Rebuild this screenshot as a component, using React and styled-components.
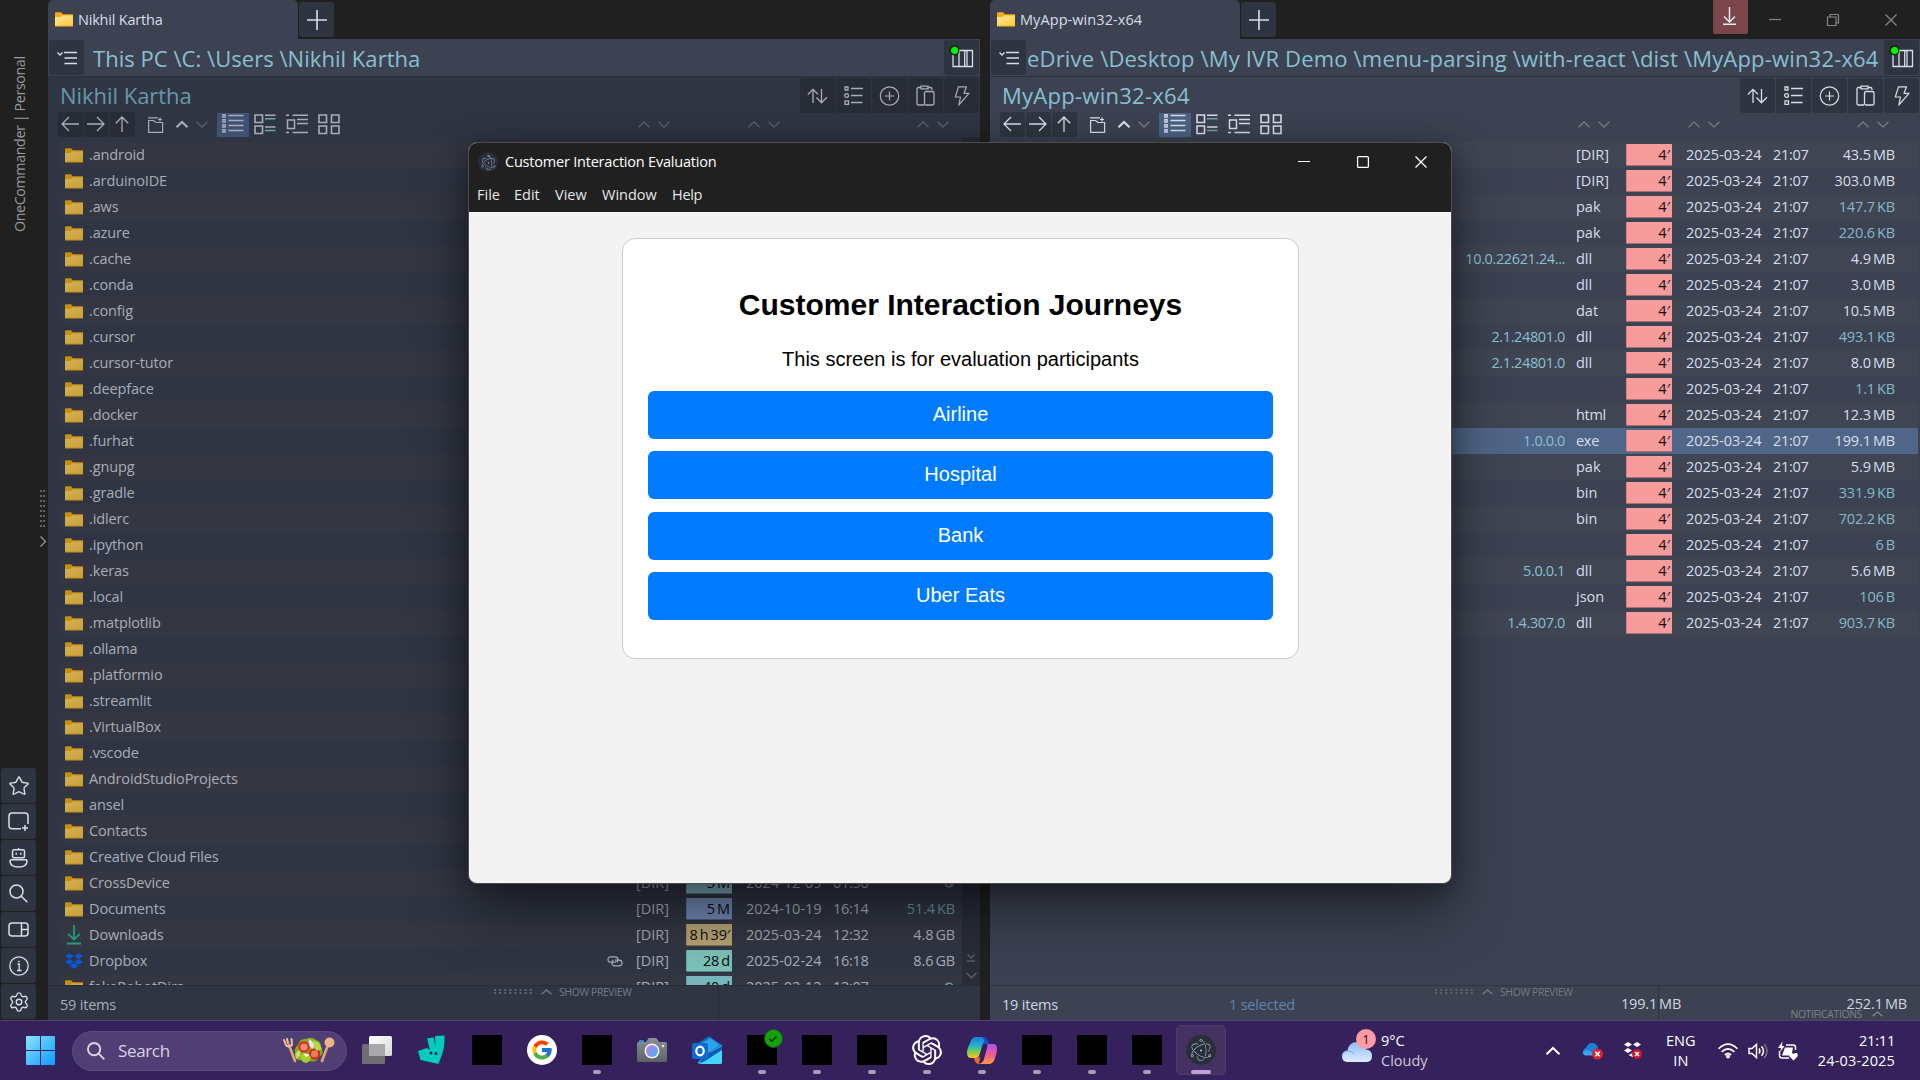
import React from "react";
import styled, { createGlobalStyle } from "styled-components";
import { Star, Settings } from "lucide-react";
import { SiElectron, SiOpenai, SiDropbox } from "react-icons/si";
import { FcGoogle } from "react-icons/fc";

const ui = `"Open Sans", "Noto Sans", sans-serif`;

const Global = createGlobalStyle`
  * { box-sizing: border-box; }
  body { margin: 0; background: #202020; font-family: ${ui}; overflow: hidden; }
  svg { display: block; flex: none; overflow: visible; }
`;

/* ---------- primitives ---------- */
const Desktop = styled.div`
  position: relative;
  width: 1920px;
  height: 1080px;
  display: flex;
  flex-direction: column;
  overflow: hidden;
  background: #202020;
`;
const Workspace = styled.div`
  height: 1020px;
  display: flex;
`;
const Label = styled.span`
  font-size: ${(p) => p.$size || 14.5}px;
  letter-spacing: ${(p) => p.$ls || 0}px;
  word-spacing: ${(p) => p.$ws || 0}px;
  color: ${(p) => p.$color || "inherit"};
  margin-left: ${(p) => p.$ml || 0}px;
  line-height: 20px;
  white-space: pre;
  flex: none;
`;

/* ---------- left rail ---------- */
const Rail = styled.aside`
  width: 48px;
  height: 100%;
  display: flex;
  flex-direction: column;
  padding: 54px 0 0 1px;
  color: #9b9b9b;
`;
const RailTitle = styled.div`
  writing-mode: vertical-rl;
  transform: rotate(180deg);
  height: 178px;
  width: 20px;
  margin-left: 9px;
  line-height: 20px;
  font-size: 14.3px;
  white-space: pre;
  letter-spacing: -0.4px;
`;
const RailGrip = styled.div`
  margin: 258px 0 0 39px;
  height: 278px;
  display: flex;
  flex-direction: column;
  gap: 8px;
`;
const RailButtons = styled.div`
  display: flex;
  flex-direction: column;
  gap: 1px;
`;
const Square = styled.div`
  width: ${(p) => p.$w || 35}px;
  height: ${(p) => p.$h || 35}px;
  padding: ${(p) => p.$pad || 0};
  border-radius: 3px;
  background: ${(p) => p.$bg || "#2e3440"};
  color: ${(p) => p.$color || "#d8dee9"};
  display: flex;
  align-items: center;
  justify-content: center;
  flex: none;
`;

/* ---------- panes ---------- */
const Pane = styled.section`
  width: ${(p) => p.$w}px;
  margin-right: ${(p) => p.$gap || 0}px;
  height: 100%;
  display: flex;
  flex-direction: column;
  flex: none;
`;
const TabStrip = styled.div`
  height: 39px;
  display: flex;
`;
const Tab = styled.div`
  width: 250px;
  height: 39px;
  background: #3c4252;
  border-radius: 5px 5px 0 0;
  display: flex;
  align-items: center;
  padding-left: 7px;
  color: #d8dee9;
`;
const NewTab = styled.div`
  padding: 2px 0 0 1px;
`;
const PathBar = styled.div`
  height: 38px;
  background: #3c4252;
  border-bottom: 1px solid #2b303c;
  display: flex;
  align-items: flex-start;
  padding: 1px 1px 0 1px;
`;
const PathText = styled.div`
  flex: 1;
  height: 36px;
  display: flex;
  align-items: center;
  color: #88c0d0;
  overflow: hidden;
`;
const PaneBody = styled.div`
  height: 908px;
  background: ${(p) => (p.$active ? "#3c4252" : "#2f3543")};
  color: ${(p) => (p.$active ? "#d8dee9" : "#a9adb7")};
  display: flex;
  flex-direction: column;
  overflow: hidden;
`;
const HeadRow = styled.div`
  height: 36px;
  padding: 1px 1px 0 12px;
  display: flex;
  justify-content: space-between;
`;
const HeadTitle = styled.div`
  height: 33px;
  display: flex;
  align-items: center;
  color: ${(p) => (p.$active ? "#88c0d0" : "#659aa8")};
`;
const ToolGroup = styled.div`
  display: flex;
  gap: 1px;
`;
const NavRow = styled.div`
  height: 29px;
  margin-top: -1px;
  padding-left: 10px;
  display: flex;
  align-items: flex-start;
`;
const NavExtras = styled.div`
  display: flex;
  align-items: center;
  height: 25px;
  margin-left: 13px;
  gap: 8px;
`;
const History = styled.div`
  display: flex;
  align-items: center;
  gap: 8px;
  margin-left: 5px;
`;
const Faint = styled.div`
  color: ${(p) => (p.$active ? "#73777f" : "#5c5f66")};
`;
const ViewModes = styled.div`
  display: flex;
  height: 24px;
  margin: 1px 0 0 9px;
`;
const ViewMode = styled.div`
  width: 32px;
  height: 24px;
  padding-bottom: 2px;
  display: flex;
  align-items: center;
  justify-content: center;
  background: ${(p) => p.$bg || "transparent"};
`;
const SortPair = styled.div`
  display: flex;
  gap: 8px;
  margin: 9px 0 0 ${(p) => p.$ml}px;
  color: ${(p) => (p.$active ? "#73777f" : "#5c5f66")};
`;
const ListArea = styled.div`
  flex: 1;
  display: flex;
  min-height: 0;
  padding-left: 10px;
`;
const Rows = styled.div`
  flex: 1;
  padding-top: 1px;
  overflow: hidden;
`;
const Row = styled.div`
  height: 26px;
  display: flex;
  align-items: center;
  padding-left: 7px;
  background: ${(p) =>
    p.$selected ? "#506688" : p.$alt ? (p.$active ? "#404554" : "#343742") : "transparent"};
`;
const NameCell = styled.div`
  display: flex;
  align-items: center;
  gap: 6px;
  flex: 1;
`;
const LinkCell = styled.div`
  width: 29px;
`;
const VersionCell = styled.div`
  flex: 1;
  display: flex;
  justify-content: flex-end;
  color: #88c0d0;
  padding-right: 11px;
`;
const ExtCell = styled.div`
  width: ${(p) => p.$w}px;
  display: flex;
`;
const AgeCell = styled.div`
  width: 46px;
  height: 22px;
  background: ${(p) => p.$bg};
  box-shadow: inset 1px 0 rgba(0, 0, 0, 0.15), inset 0 -1px rgba(0, 0, 0, 0.3);
  color: #0c0c0c;
  display: flex;
  align-items: center;
  justify-content: flex-end;
  padding-right: 2px;
`;
const DateCell = styled.div`
  width: 87px;
  margin-left: 14px;
  display: flex;
`;
const TimeCell = styled.div`
  width: 36px;
  display: flex;
`;
const SizeCell = styled.div`
  width: 86px;
  display: flex;
  justify-content: flex-end;
  color: ${(p) => (p.$dim ? "#83b9c8" : "inherit")};
  opacity: ${(p) => (p.$dim && !p.$active ? 0.7 : 1)};
`;
const RowEnd = styled.div`
  width: ${(p) => p.$w}px;
`;
const Scroll = styled.div`
  width: 18px;
  margin-top: -4px;
  background: #282d38;
  color: #5c5f66;
  display: flex;
  flex-direction: column;
  align-items: center;
  justify-content: flex-end;
  gap: 10px;
  padding-bottom: 6px;
`;
const Status = styled.div`
  height: 35px;
  border-top: 1px solid ${(p) => (p.$active ? "#2e3440" : "#262b36")};
  background: ${(p) => (p.$active ? "#3c4252" : "#2f3543")};
  color: ${(p) => (p.$active ? "#d0d5e0" : "#a9adb7")};
  display: flex;
`;
const StatusItems = styled.div`
  width: ${(p) => p.$w}px;
  padding: 9px 0 0 ${(p) => p.$pl}px;
  flex: none;
  display: flex;
`;
const Preview = styled.div`
  display: flex;
  align-items: center;
  height: 11px;
  color: #747985;
  width: ${(p) => p.$w}px;
  flex: none;
`;
const PreviewChevron = styled.div`
  margin: 0 7px 0 9px;
`;
const Totals = styled.div`
  height: 34px;
  flex: 1;
  margin-left: ${(p) => p.$ml || 0}px;
  border-left: 1px solid ${(p) => (p.$active ? "#2e3440" : "#262b36")};
  display: flex;
  flex-direction: column;
  align-items: flex-end;
  padding: 8px 13px 0 0;
`;
const Notice = styled.div`
  display: flex;
  align-items: center;
  gap: 10px;
  height: 12px;
  margin: -6px 24px 0 0;
  color: #7d828c;
`;
const Selected = styled.div`
  width: 60px;
  padding-top: 8px;
  margin: 0 -59px 0 -1px;
  display: flex;
`;
const CaptionBar = styled.div`
  flex: 1;
  display: flex;
  justify-content: flex-end;
  color: #858585;
`;
const CaptionBtn = styled.div`
  width: 58px;
  height: 39px;
  display: flex;
  align-items: center;
  justify-content: center;
`;
const UpdateBtn = styled.div`
  width: 35px;
  height: 34px;
  background: #7a464c;
  border-radius: 0 0 2px 2px;
  margin-right: -2px;
  padding: 0 2px 2px 0;
  display: flex;
  align-items: center;
  justify-content: center;
  color: #e5e9f0;
`;

/* ---------- foreground window ---------- */
const Win = styled.div`
  position: absolute;
  left: 468px;
  top: 142px;
  width: 984px;
  height: 742px;
  border-radius: 9px;
  border: 1px solid #4b4d50;
  background: #f3f3f3;
  overflow: hidden;
`;
const WinShadow = styled.div`
  position: absolute;
  left: 468px;
  top: 142px;
  width: 984px;
  height: 742px;
  border-radius: 9px;
  box-shadow: 0 30px 60px rgba(0, 0, 0, 0.42), 0 4px 24px rgba(0, 0, 0, 0.35);
`;
const TitleBar = styled.div`
  height: 38px;
  background: #202020;
  color: #fff;
  display: flex;
  align-items: center;
  padding-left: 9px;
`;
const AppIcon = styled.div`
  width: ${(p) => p.$d}px;
  height: ${(p) => p.$d}px;
  border-radius: 50%;
  background: #2b2e3a;
  color: #9fcdd8;
  display: flex;
  align-items: center;
  justify-content: center;
  flex: none;
`;
const WinControls = styled.div`
  margin-left: auto;
  display: flex;
  align-items: center;
  height: 36px;
  padding-right: 24px;
  gap: 46.5px;
`;
const MenuBar = styled.div`
  height: 31px;
  background: #202020;
  color: #e6e6e6;
  display: flex;
  padding: 4px 0 0 8px;
  align-items: flex-start;
`;
const MenuItem = styled.div`
  width: ${(p) => p.$w}px;
  display: flex;
`;
const Page = styled.main`
  height: 671px;
  border-top: 1px solid #fff;
  padding: 25px 0 0 153px;
  font-family: "Liberation Sans", Arial, sans-serif;
`;
const Card = styled.div`
  width: 677px;
  height: 421px;
  background: #fff;
  border: 1px solid #ccc;
  border-radius: 13px;
  padding: 25px;
  display: flex;
  flex-direction: column;
  align-items: center;
`;
const CardTitle = styled.h1`
  margin: 24px 0 0;
  font-size: 30px;
  line-height: 34px;
  font-weight: 700;
  color: #000;
`;
const CardText = styled.p`
  margin: 26px 0 20px;
  font-size: 20px;
  line-height: 23px;
  color: #000;
`;
const Choices = styled.div`
  width: 625px;
  display: flex;
  flex-direction: column;
  gap: 12.4px;
`;
const Choice = styled.button`
  height: 48px;
  border: 0;
  border-radius: 6px;
  background: #007bff;
  color: #fff;
  font: 20px "Liberation Sans", Arial, sans-serif;
  padding: 0 0 1.2px;
`;

/* ---------- taskbar ---------- */
const Taskbar = styled.footer`
  position: relative;
  height: 60px;
  background: #35215c;
  border-top: 1px solid #52416a;
  display: flex;
  align-items: center;
  padding-left: 26px;
  color: #fff;
`;
const SearchBox = styled.div`
  width: 275px;
  height: 40px;
  margin: 0 2px 0 17px;
  border-radius: 20px;
  background: #503f74;
  border: 1px solid #5d4d80;
  display: flex;
  align-items: center;
  padding: 0 11px 0 14px;
  color: #d9d3e3;
`;
const Salad = styled.div`
  margin-left: auto;
`;
const TaskItems = styled.div`
  display: flex;
  height: 59px;
`;
const TaskItem = styled.div`
  width: 55px;
  height: 59px;
  padding-top: 14px;
  display: flex;
  flex-direction: column;
  align-items: center;
  gap: 5px;
`;
const Glyph = styled.div`
  width: 30px;
  height: 30px;
  display: flex;
  align-items: center;
  justify-content: center;
  flex: none;
`;
const Blank = styled.div`
  position: relative;
  width: 30px;
  height: 30px;
  background: #000;
`;
const Check = styled.div`
  position: absolute;
  right: -6px;
  top: -6px;
  width: 19px;
  height: 19px;
  border-radius: 50%;
  background: #13a10e;
  border: 1px solid #1d5a20;
  display: flex;
  align-items: center;
  justify-content: center;
  color: #0b2a0a;
`;
const Pip = styled.div`
  width: ${(p) => (p.$on ? 20 : 8)}px;
  height: 4px;
  border-radius: 2px;
  background: ${(p) => (p.$on ? "#c39fdc" : "#a89bb9")};
`;
const ActiveTile = styled.div`
  width: 50px;
  height: 50px;
  margin: 4px 0 0 2px;
  padding-top: 9px;
  border-radius: 5px;
  background: #443263;
  border: 1px solid #4e3d6c;
  display: flex;
  flex-direction: column;
  align-items: center;
  gap: 5px;
`;
const Weather = styled.div`
  margin-left: 116px;
  display: flex;
  align-items: center;
  gap: 9px;
`;
const Stack = styled.div`
  display: flex;
  flex-direction: column;
  align-items: ${(p) => p.$align || "flex-start"};
  width: ${(p) => p.$w || "auto"};
  margin-right: ${(p) => p.$mr || 0}px;
`;
const Tray = styled.div`
  margin-left: auto;
  display: flex;
  align-items: center;
  padding-right: 25px;
`;
const TrayIcon = styled.div`
  margin-right: ${(p) => p.$mr}px;
`;

/* ---------- icons ---------- */
const Ico = ({ w, h, sw = 1.3, children }) => (
  <svg width={w} height={h} viewBox={`0 0 ${w} ${h}`} fill="none" stroke="currentColor" strokeWidth={sw}>
    {children}
  </svg>
);
const Plus = () => <Ico w={20} h={20} sw={1.6}><path d="M10 0v20M0 10h20" /></Ico>;
const PathMenu = () => <Ico w={20} h={14} sw={1.3}><path d="M0.5 1.5l2.5 2.5L5.500 1.500M7 1.500h13M7.500 7h12.500M7.500 12.500h12.500" /></Ico>;
const Columns = () => (
  <Ico w={24} h={22} sw={1.3}>
    <path d="M3 3.500h19.500v16H3zM9 3.500v16M14.700 3.500v16M17 3.500v16" />
    <circle cx="4.500" cy="3.500" r="4.300" fill="#00f400" stroke="#0d1a0d" strokeWidth="1.200" />
  </Ico>
);
const UpDown = () => <Ico w={21} h={16}><path d="M6 15V1.500M0.800 6.500L6 1.300l5 5M14.500 1v13.500M9.500 9.500l5 5.200 5.500-5.500" /></Ico>;
const Bullets = () => <Ico w={19} h={19}><path d="M7 2.500h12M7 9.500h11.500M7 16.500h11.500M1 1h3v3h-3zM1 14.800h3.500v3.500h-3.500z" /><circle cx="2.600" cy="9.500" r="1.900" /></Ico>;
const AddCircle = () => <Ico w={20} h={20} sw={1.2}><circle cx="9.500" cy="10" r="9.200" /><path d="M9.500 5.500v9M5 10h9" /></Ico>;
const Paste = () => <Ico w={19} h={21} sw={1.3}><path d="M8 20H2.500q-1.500 0-1.500-1.500V4q0-1.500 1.500-1.500H5M12 2.500h2.500q1.500 0 1.500 1.500v1M5 1.200h7v2.600H5z" /><rect x="8.500" y="6.500" width="9.500" height="13.500" rx="1.500" /></Ico>;
const Bolt = () => <Ico w={16} h={20} sw={1.2}><path d="M4.500 0.800h8l-2.500 6.500h5L4.800 19l1.700-8H1.300z" strokeLinejoin="round" /></Ico>;
const ArrowL = () => <Ico w={18} h={16}><path d="M18 8H1M8 1L1 8l7 7" /></Ico>;
const ArrowR = () => <Ico w={18} h={16}><path d="M0 8h17M10 1l7 7-7 7" /></Ico>;
const ArrowU = () => <Ico w={14} h={16}><path d="M7 16V1M0.800 7.200L7 1l6.200 6.200" /></Ico>;
const FolderStar = () => <Ico w={15} h={16} sw={1.2}><path d="M0 .8h10M0.600 4v11.400h14V5.500H8L5.500 3.500H.6zM12 .5v4M10 2.500h4" /></Ico>;
const Chev = ({ down, sw = 1.4, w = 12, h = 7 }) => <Ico w={w} h={h} sw={sw}><path d={down ? `M.5 .7L${w / 2} ${h - 1}L${w - 0.5} .7` : `M.5 ${h - 0.7}L${w / 2} 1L${w - 0.5} ${h - 0.7}`} /></Ico>;
const ViewList = () => <Ico w={22} h={20} sw={1.7}><path d="M6.500 1.500h15M6.500 6.500h15M6.500 11.500h15M6.500 16.500h15" /><path d="M.8.600h2.400v2.400H.8zM.8 5.600h2.400v2.400H.8zM.8 10.600h2.400v2.400H.8zM.8 15.600h2.400v2.400H.8z" strokeWidth="1.300" /></Ico>;
const ViewTiles = () => <Ico w={22} h={20} sw={1.6}><path d="M1 1h7.500v7.500H1zM1 12h7.500v7.500H1zM11 1.200h10.500M11 13h10.500" /><path d="M11 4.800h10.500M11 16.500h10.500" stroke="#6ba3b0" /></Ico>;
const ViewContent = () => <Ico w={22} h={20} sw={1.5}><path d="M1.500 6h7v8.500h-7zM6.500 1.300h15.500M11 5.500h11M11 9.500h11M6.500 18.500h15.500M0 1.300h3M0 18.500h3" /></Ico>;
const ViewGrid = () => <Ico w={22} h={20} sw={1.6}><path d="M1 1h7.500v7.500H1zM1 12h7.500v7.500H1zM13.500 1h7.500v7.500h-7.500zM13.500 12h7.500v7.500h-7.500z" /></Ico>;
const Folder = ({ bright }) => (
  <svg width="18" height="15" viewBox="0 0 18 15">
    <defs>
      <linearGradient id={bright ? "fb" : "fd"} x1="0" y1="0" x2="1" y2="1">
        <stop offset="0" stopColor={bright ? "#ffe694" : "#d4b25c"} />
        <stop offset="1" stopColor={bright ? "#ffc93c" : "#c9a030"} />
      </linearGradient>
    </defs>
    <path d="M0 1.200Q0 .3.900.3H6l1.800 1.900H18V14H0z" fill={bright ? "#f5ac12" : "#c68f16"} />
    <path d="M0 5h5.500l2-1.500H18V14H0z" fill={`url(#${bright ? "fb" : "fd"})`} />
    <path d="M0 14.200h18" stroke={bright ? "#e0a01c" : "#b1811a"} strokeWidth=".9" />
  </svg>
);
const DownloadGreen = () => <svg width="18" height="20" viewBox="0 0 18 20" fill="none" stroke="#1f9c7c" strokeWidth="1.800"><path d="M9 0v14M3.200 8.800L9 14.500l5.800-5.700M2 18.500h14" /></svg>;
const Link = () => <Ico w={16} h={11} sw={1.2}><path d="M9 6.200H4Q1 6.200 1 3.400T4 .8h4q3 0 3 2.600T9.500 6M8 4.200h4q3 0 3 2.800t-3 2.800H8q-3 0-3-2.800T6.500 4.400" /></Ico>;
const Empty = () => <svg width="10" height="10" viewBox="0 0 10 10" fill="none" stroke="#6fa3b0" strokeWidth="1.300"><circle cx="4" cy="5" r="3.900" /><path d="M1.500 2.500l5 5" /></svg>;
const Grip = ({ cols, rows, color = "#5f646c" }) => (
  <svg width={cols * 5 - 2} height={rows > 2 ? rows * 5 - 2 : 5} fill={color}>
    {Array.from({ length: cols * rows }, (_, i) => <rect key={i} x={(i % cols) * (cols > 2 ? 5.100 : 3)} y={Math.floor(i / cols) * (rows > 2 ? 5 : 3)} width="2" height="2" />)}
  </svg>
);
const TabAdd = () => <Ico w={21} h={20} sw={1.5}><path d="M13 16.800H4Q1 16.800 1 13.800V4q0-3 3-3h13q3 0 3 3v8M17 13v6M14 16h6" /></Ico>;
const Robot = () => <Ico w={19} h={20} sw={1.500}><path d="M9.500 0v2M5 1.800h9q1.500 0 1.500 1.500v5Q15.500 9.800 14 9.800H5q-1.500 0-1.500-1.500v-5Q3.500 1.800 5 1.800zM1 13q0-1.200 1.200-1.200h14.600Q18 11.800 18 13q0 6-8.500 6T1 13z" /><path d="M6.500 5.800h1.500M11 5.800h1.500" strokeWidth="2" /></Ico>;
const Lens = ({ s = 19, sw = 1.5 }) => <svg width={s} height={s} viewBox="0 0 19 19" fill="none" stroke="currentColor" strokeWidth={sw}><circle cx="7.500" cy="7.500" r="6.500" /><path d="M12.300 12.300l6 6" /></svg>;
const Panel = () => <Ico w={21} h={15} sw={1.500}><rect x="1" y="1" width="19" height="13" rx="3" /><path d="M13.500 1v13M13.500 7.500H20" /></Ico>;
const InfoI = () => <Ico w={20} h={20} sw={1.300}><circle cx="10" cy="10" r="9.200" /><path d="M8.500 8h1.700v6.500M8 14.500h4.500" /><path d="M9.200 5.500h1.500" /></Ico>;
const CloseX = () => <Ico w={12} h={12} sw={1.300}><path d="M.5.500l11 11M11.500.500l-11 11" /></Ico>;
const Minus = () => <Ico w={12} h={12} sw={1.200}><path d="M0 5.500h12" /></Ico>;
const WinLogo = () => (
  <svg width="29" height="29" viewBox="0 0 29 29">
    <defs><linearGradient id="wl" gradientUnits="userSpaceOnUse" x1="0" y1="0" x2="29" y2="29"><stop offset="0" stopColor="#8be4ff" /><stop offset="1" stopColor="#0a9bff" /></linearGradient></defs>
    <path d="M0 1q0-1 1-1h13v14H0zM15 0h13q1 0 1 1v13H15zM0 15h14v14H1q-1 0-1-1zM15 15h14v13q0 1-1 1H15z" fill="url(#wl)" />
  </svg>
);
const SaladArt = () => (
  <svg width="52" height="27" viewBox="0 0 52 27">
    <path d="M6 8l6 16" stroke="#e0a878" strokeWidth="2.600" strokeLinecap="round" />
    <path d="M1 3l2 5q2 3 6 0l-.5-6M4 2l1 4" stroke="#f0c39c" strokeWidth="2" fill="none" strokeLinecap="round" />
    <path d="M45 8l-6 16" stroke="#e0a878" strokeWidth="2.600" strokeLinecap="round" />
    <circle cx="46.500" cy="5.500" r="5" fill="#e9b384" />
    <path d="M15 8q2-7 8-6 6-3 10 1 6 2 5 8 4 6-2 9-3 6-9 4-6 3-9-1-6 1-5-5-3-6 2-10z" fill="#7fb31b" />
    <path d="M12 17l6-6-1 8-4 3z" fill="#c9e05a" />
    <circle cx="21" cy="10" r="5.800" fill="#d9301f" /><circle cx="21" cy="10" r="3.600" fill="#f28b72" />
    <circle cx="31.500" cy="17" r="5.800" fill="#cf2a1d" /><circle cx="31.500" cy="17" r="3.600" fill="#f07a60" />
    <path d="M30 3l6 3 3 6-5 2-5-5z" fill="#b9d64a" />
    <path d="M26 2q6 3 4 10-5-2-4-10z" fill="#f3e6f2" /><path d="M17 19q5-5 11 1-1 5-5 6-5-1-6-7z" fill="#a3cf2f" /><path d="M20 16l7 2-4 2z" fill="#fff" />
  </svg>
);
const TaskView = () => (
  <svg width="30" height="28" viewBox="0 0 30 28">
    <defs><linearGradient id="tv" x1="0" y1="0" x2="1" y2="1"><stop offset="0" stopColor="#fff" /><stop offset="1" stopColor="#d8d8d8" /></linearGradient></defs>
    <rect x="7" y="0" width="23" height="20" rx="1.500" fill="url(#tv)" />
    <rect x="0" y="8" width="23" height="20" rx="1.500" fill="#6f6f73" />
    <rect x="7" y="8" width="16" height="12" fill="#a9a9ac" />
  </svg>
);
const Roo = () => (
  <svg width="28" height="30" viewBox="0 0 28 30">
    <path d="M17 1l9.500-.5q.5 11-2.500 19l-3.500 9.500L2.500 25 0 16l9-3 3 2L9 3.500l6.500-1.200 2 9z" fill="#00ccbc" />
    <circle cx="13" cy="18" r="1.500" fill="#35215c" /><circle cx="18" cy="18.500" r="1.500" fill="#35215c" />
  </svg>
);
const CameraArt = () => (
  <svg width="30" height="24" viewBox="0 0 30 24">
    <defs><linearGradient id="cm" x1="0" y1="0" x2="1" y2="1"><stop offset="0" stopColor="#c77be8" /><stop offset="1" stopColor="#38b6f0" /></linearGradient>
      <linearGradient id="cb" x1="0" y1="0" x2="0" y2="1"><stop offset="0" stopColor="#8c9196" /><stop offset="1" stopColor="#5c6166" /></linearGradient></defs>
    <rect x="2" y="2" width="5" height="4" rx="1" fill="#2a8de0" />
    <path d="M0 5.500Q0 4 1.500 4H9l2-3q.5-1 1.500-1h6q1 0 1.500 1l2 3h6.500Q30 4 30 5.500v17q0 1.500-1.500 1.500h-27Q0 24 0 22.500z" fill="url(#cb)" />
    <circle cx="15" cy="13" r="7.500" fill="#f5f5f7" /><circle cx="15" cy="13" r="6" fill="url(#cm)" /><circle cx="26" cy="8" r="1.200" fill="#dfe3e6" />
  </svg>
);
const OutlookArt = () => (
  <svg width="30" height="28" viewBox="0 0 30 28">
    <path d="M4 8L17 0l13 9v6H4z" fill="#1067b8" /><path d="M8 8l10-6 10 7-12 8z" fill="#2aa4ea" />
    <path d="M30 9v17q0 2-2 2H8q-2 0-2-2l12-10z" fill="#35c3f5" /><path d="M30 10L12 20l-5 7 12-3L30 14z" fill="#0f58b5" /><path d="M30 14L9 27.500Q10 28 12 28h16q2 0 2-2z" fill="#45d4fa" />
    <rect x="0" y="7" width="16" height="16" rx="2" fill="#0f6cd0" /><ellipse cx="8" cy="15" rx="3.700" ry="4.300" fill="none" stroke="#fff" strokeWidth="2.200" />
  </svg>
);
const CopilotArt = () => (
  <svg width="30" height="27" viewBox="0 0 30 27">
    <defs>
      <linearGradient id="c1" x1="0" y1="0" x2="0" y2="1"><stop offset="0" stopColor="#1d7be0" /><stop offset=".4" stopColor="#1fb6c9" /><stop offset=".7" stopColor="#7ecb4f" /><stop offset="1" stopColor="#f6c22d" /></linearGradient>
      <linearGradient id="c2" x1="0" y1="0" x2="0" y2="1"><stop offset="0" stopColor="#a558f0" /><stop offset=".5" stopColor="#f0569a" /><stop offset="1" stopColor="#ff9a4a" /></linearGradient>
    </defs>
    <path d="M20.500 7H26q4 0 4 5 0 4-2 9-1.500 6-6.500 6H12q4-1 5-5l3-11z" fill="url(#c2)" />
    <path d="M20 5q0-5-5-5H9Q5 0 3.500 5 0 12 0 15.500 0 21 4 21h5q3 0 4-5l2.500-8Q16.500 5 20 5z" fill="url(#c1)" />
    <path d="M15 0q6 0 7 7h-4.500q-2 0-3 3 .5-4 3-5-1-4-2.500-5z" fill="#1850c0" /><path d="M7 21h3q3 0 3.500-3L12 27q-4 0-5-6z" fill="#f4603a" />
  </svg>
);
const CloudArt = () => (
  <svg width="30" height="30" viewBox="0 0 30 30">
    <defs><linearGradient id="cl" x1="0" y1="0" x2="0" y2="1"><stop offset="0" stopColor="#8fbcf5" /><stop offset="1" stopColor="#dcebff" /></linearGradient></defs>
    <path d="M6.500 26Q0 26 0 20.500 0 15 5.500 14.500 7 6 15 6q7 0 9 7.500 6 .5 6 6.500t-6 6z" fill="url(#cl)" />
    <path d="M0 20q1-5 6-5 4 0 6 3" stroke="#7aa7ea" fill="none" />
  </svg>
);
const WeatherIcon = styled.div`
  position: relative;
`;
const Badge = styled.div`
  position: absolute;
  left: 14px;
  top: -7px;
  width: 20px;
  height: 20px;
  border-radius: 50%;
  background: #ff99a4;
  color: #1c1020;
  font-size: 13px;
  line-height: 20px;
  text-align: center;
`;
const OneDrive = () => (
  <svg width="20" height="18" viewBox="0 0 20 18">
    <path d="M3 13Q0 13 0 9.500 0 7 3 6 5 1 9 1q4 0 6 4l-3 8z" fill="#1a80d9" /><path d="M3 13.500Q0 13.500 0 10q3-3 7-1l5 4.500z" fill="#3aa8f0" />
    <circle cx="14.500" cy="12" r="5.500" fill="#d9262e" /><path d="M12.300 9.800l4.400 4.400M16.700 9.800l-4.400 4.400" stroke="#fff" strokeWidth="1.500" />
  </svg>
);
const DropboxTray = () => (
  <svg width="18" height="18" viewBox="0 0 18 18">
    <path d="M4 0l4 2.500-4 2.500-4-2.500zM13 0l4 2.500-4 2.500-4-2.500zM4 6l4 2.500L4 11 0 8.500zM8.500 11l3 2-3 2-4-2z" fill="#fff" />
    <circle cx="13" cy="12" r="5" fill="#d0142c" /><path d="M11 10l4 4M15 10l-4 4" stroke="#fff" strokeWidth="1.500" />
  </svg>
);
const Wifi = () => <Ico w={20} h={15} sw={1.600}><path d="M.6 5.800q9.400-9.400 18.800 0M3.700 8.900q6.300-6 12.600 0M6.800 11.800q3.200-3 6.400 0" /><circle cx="10" cy="13.300" r="1.300" fill="currentColor" /></Ico>;
const Speaker = () => <Ico w={20} h={16} sw={1.500}><path d="M1 5.500h3L8.500 1.500v13L4 10.500H1zM11 5.500q1.800 2.500 0 5M13.500 3.200q4 4.800 0 9.600" /><path d="M16.300 1q5.500 7 0 14" opacity=".35" /></Ico>;
const Battery = () => (
  <svg width="20" height="18" viewBox="0 0 20 18" fill="none" stroke="#fff" strokeWidth="1.500">
    <path d="M8 3h7q2.500 0 2.500 2.500V8M1.500 9v4.500Q1.500 16 4 16h7" /><path d="M7 5.500h8l-1.500 8H4z" fill="#fff" stroke="none" />
    <path d="M4.500-.5L0 6h3l-1 4 4.500-6H4z" fill="#fff" stroke="none" />
    <path d="M15.500 18.500l-4-4q-1-2.500 1-3.500 2-.5 3 1 1-1.500 3-1 2 1 1 3.500z" fill="#fff" stroke="none" />
  </svg>
);

/* ---------- data ---------- */
const names = [".android", ".arduinoIDE", ".aws", ".azure", ".cache", ".conda", ".config", ".cursor", ".cursor-tutor", ".deepface", ".docker", ".furhat", ".gnupg", ".gradle", ".idlerc", ".ipython", ".keras", ".local", ".matplotlib", ".ollama", ".platformio", ".streamlit", ".VirtualBox", ".vscode", "AndroidStudioProjects", "ansel", "Contacts", "Creative Cloud Files", "CrossDevice", "Documents", "Downloads", "Dropbox", "fakeRobotDirs"];
const details = {
  CrossDevice: { age: "3 M", bg: "#86b7c8", date: "2024-12-09", time: "01:50", empty: true },
  Documents: { age: "5 M", bg: "#7389b5", date: "2024-10-19", time: "16:14", size: "51.4 KB", dim: true },
  Downloads: { age: "8 h 39′", bg: "#b8a473", date: "2025-03-24", time: "12:32", size: "4.8 GB" },
  Dropbox: { age: "28 d", bg: "#7cc2ba", date: "2025-02-24", time: "16:18", size: "8.6 GB", link: true },
  fakeRobotDirs: { age: "40 d", bg: "#76b6bc", date: "2025-02-12", time: "12:07", empty: true },
};
const files = [
  ["", "[DIR]", "43.5 MB"], ["", "[DIR]", "303.0 MB"], ["", "pak", "147.7 KB"], ["", "pak", "220.6 KB"],
  ["10.0.22621.24...", "dll", "4.9 MB"], ["", "dll", "3.0 MB"], ["", "dat", "10.5 MB"], ["2.1.24801.0", "dll", "493.1 KB"],
  ["2.1.24801.0", "dll", "8.0 MB"], ["", "", "1.1 KB"], ["", "html", "12.3 MB"], ["1.0.0.0", "exe", "199.1 MB"],
  ["", "pak", "5.9 MB"], ["", "bin", "331.9 KB"], ["", "bin", "702.2 KB"], ["", "", "6 B"], ["5.0.0.1", "dll", "5.6 MB"],
  ["", "json", "106 B"], ["1.4.307.0", "dll", "903.7 KB"],
];

const Tools = ({ bg, color }) => (
  <ToolGroup>
    {[UpDown, Bullets, AddCircle, Paste, Bolt].map((I, i) => <Square key={i} $bg={bg} $color={color}><I /></Square>)}
  </ToolGroup>
);
const Nav = ({ active }) => {
  const bg = active ? "#2f3541" : "#282c36";
  return (
    <NavRow>
      <ToolGroup>
        {[ArrowL, ArrowR, ArrowU].map((I, i) => (
          <Square key={i} $w={25} $h={25} $pad="0 1px 2px 0" $bg={bg} $color={active ? "#d8dee9" : "#a9adb7"}><I /></Square>
        ))}
      </ToolGroup>
      <NavExtras>
        <FolderStar />
        <History>
          <Chev sw={2.2} h={7} />
          <Faint $active={active}><Chev down /></Faint>
        </History>
      </NavExtras>
      <ViewModes>
        <ViewMode $bg={active ? "#4c6385" : "#405273"}><ViewList /></ViewMode>
        <ViewMode><ViewTiles /></ViewMode>
        <ViewMode><ViewContent /></ViewMode>
        <ViewMode><ViewGrid /></ViewMode>
      </ViewModes>
      <SortPair $ml={active ? 291 : 293} $active={active}><Chev /><Chev down /></SortPair>
      <SortPair $ml={78} $active={active}><Chev /><Chev down /></SortPair>
      <SortPair $ml={137} $active={active}><Chev /><Chev down /></SortPair>
    </NavRow>
  );
};
const Handle = ({ w }) => (
  <Preview $w={w}>
    <Grip cols={8} rows={2} />
    <PreviewChevron><Chev w={11} h={6} /></PreviewChevron>
    <Label $size={10.4} $ls={-0.35}>SHOW PREVIEW</Label>
  </Preview>
);

const Size = ({ children }) => <Label $ls={-0.15} $ws={-1.5}>{children}</Label>;

export default function App() {
  return (
    <>
      <Global />
      <Desktop>
        <Workspace>
          <Rail>
            <RailTitle>OneCommander | Personal</RailTitle>
            <RailGrip>
              <Grip cols={2} rows={8} />
              <Ico w={6} h={11} sw={1.2}><path d="M.5.500l5 5-5 5" /></Ico>
            </RailGrip>
            <RailButtons>
              <Square><Star size={22} strokeWidth={1.5} /></Square>
              <Square><TabAdd /></Square>
              <Square><Robot /></Square>
              <Square><Lens /></Square>
              <Square><Panel /></Square>
              <Square><InfoI /></Square>
              <Square><Settings size={22} strokeWidth={1.5} /></Square>
            </RailButtons>
          </Rail>

          <Pane $w={932} $gap={10}>
            <TabStrip>
              <Tab><Folder bright /><Label $ml={5} $ls={-0.2}>Nikhil Kartha</Label></Tab>
              <NewTab><Square><Plus /></Square></NewTab>
            </TabStrip>
            <PathBar>
              <Square><PathMenu /></Square>
              <PathText><Label $size={22} $ml={9} $ls={0.04}>{"This PC \\C: \\Users \\Nikhil Kartha"}</Label></PathText>
              <Square><Columns /></Square>
            </PathBar>
            <PaneBody>
              <HeadRow>
                <HeadTitle><Label $size={22} $ls={-0.04}>Nikhil Kartha</Label></HeadTitle>
                <Tools bg="#282c36" color="#a9adb7" />
              </HeadRow>
              <Nav />
              <ListArea>
                <Rows>
                  {names.map((n, i) => {
                    const d = details[n];
                    return (
                      <Row key={n} $alt={i % 2 === 0}>
                        <NameCell>
                          {n === "Downloads" ? <DownloadGreen /> : n === "Dropbox" ? <SiDropbox size={18} color="#0b57d8" /> : <Folder />}
                          <Label $ls={-0.13}>{n}</Label>
                        </NameCell>
                        {d && (
                          <>
                            <LinkCell>{d.link && <Link />}</LinkCell>
                            <ExtCell $w={50}><Label>[DIR]</Label></ExtCell>
                            <AgeCell $bg={d.bg}><Label $ls={-0.15} $ws={-1.5}>{d.age}</Label></AgeCell>
                            <DateCell><Label>{d.date}</Label></DateCell>
                            <TimeCell><Label $ls={-0.3}>{d.time}</Label></TimeCell>
                            <SizeCell $dim={d.dim}>{d.empty ? <Empty /> : <Size>{d.size}</Size>}</SizeCell>
                            <RowEnd $w={7} />
                          </>
                        )}
                      </Row>
                    );
                  })}
                </Rows>
                <Scroll>
                  <Ico w={10} h={8}><path d="M1.500.500L5 4 8.500.500M1 7h8" /></Ico>
                  <Chev down w={11} />
                </Scroll>
              </ListArea>
            </PaneBody>
            <Status>
              <StatusItems $w={446} $pl={12}><Label $ls={-0.2}>59 items</Label></StatusItems>
              <Handle w={224} />
              <Totals />
            </Status>
          </Pane>

          <Pane $w={930}>
            <TabStrip>
              <Tab><Folder bright /><Label $ml={5} $ls={0.07}>MyApp-win32-x64</Label></Tab>
              <NewTab><Square><Plus /></Square></NewTab>
              <CaptionBar>
                <UpdateBtn><Ico w={13} h={18} sw={1.5}><path d="M6.500 0v15M1 9.500l5.500 5.500L12 9.500M0 17.300h13" /></Ico></UpdateBtn>
                <CaptionBtn><Minus /></CaptionBtn>
                <CaptionBtn><Ico w={12} h={12} sw={1.2}><path d="M.5 3h8.500v8.500H.5zM3 3V.500h8.500V9H9" /></Ico></CaptionBtn>
                <CaptionBtn><CloseX /></CaptionBtn>
              </CaptionBar>
            </TabStrip>
            <PathBar>
              <Square><PathMenu /></Square>
              <PathText><Label $size={22} $ml={1} $ls={0.18}>{"eDrive \\Desktop \\My IVR Demo \\menu-parsing \\with-react \\dist \\MyApp-win32-x64"}</Label></PathText>
              <Square><Columns /></Square>
            </PathBar>
            <PaneBody $active>
              <HeadRow>
                <HeadTitle $active><Label $size={22} $ls={0.27}>MyApp-win32-x64</Label></HeadTitle>
                <Tools />
              </HeadRow>
              <Nav active />
              <ListArea>
                <Rows>
                  {files.map(([v, e, s], i) => (
                    <Row key={i} $active $alt={i % 2 === 0} $selected={i === 11}>
                      <VersionCell><Label $ls={-0.38}>{v}</Label></VersionCell>
                      <ExtCell $w={50}><Label $ls={e === "html" || e === "exe" ? -0.3 : 0}>{e}</Label></ExtCell>
                      <AgeCell $bg="#f79c9c"><Label>4′</Label></AgeCell>
                      <DateCell><Label>2025-03-24</Label></DateCell>
                      <TimeCell><Label $ls={-0.3}>21:07</Label></TimeCell>
                      <SizeCell $active $dim={!s.includes("MB")}><Size>{s}</Size></SizeCell>
                      <RowEnd $w={23} />
                    </Row>
                  ))}
                </Rows>
                <RowEnd $w={2} />
              </ListArea>
            </PaneBody>
            <Status $active>
              <StatusItems $w={239} $pl={12}><Label $ls={-0.2}>19 items</Label></StatusItems>
              <StatusItems $w={206} $pl={0}><Label $color="#5f82b0" $ls={-0.2}>1 selected</Label></StatusItems>
              <Handle w={187} />
              <Selected><Label $ls={-0.2} $ws={-1.5}>199.1 MB</Label></Selected>
              <Totals $active $ml={36}>
                <Label $ls={-0.15} $ws={-1.5}>252.1 MB</Label>
                <Notice><Label $size={10.4} $ls={-0.35}>NOTIFICATIONS</Label><Chev w={11} h={6} /></Notice>
              </Totals>
            </Status>
          </Pane>
        </Workspace>

        <WinShadow />
        <Taskbar>
          <WinLogo />
          <SearchBox><Lens s={18} sw={2} /><Label $size={17} $ml={13} $ls={-0.35}>Search</Label><Salad><SaladArt /></Salad></SearchBox>
          <TaskItems>
            <TaskItem><Glyph><TaskView /></Glyph></TaskItem>
            <TaskItem><Glyph><Roo /></Glyph></TaskItem>
            <TaskItem><Blank /></TaskItem>
            <TaskItem><svg width="30" height="30"><circle cx="15" cy="15" r="15" fill="#fff" /><g transform="translate(3.500 3.500)"><FcGoogle size={23} /></g></svg></TaskItem>
            <TaskItem><Blank /><Pip /></TaskItem>
            <TaskItem><Glyph><CameraArt /></Glyph></TaskItem>
            <TaskItem><Glyph><OutlookArt /></Glyph></TaskItem>
            <TaskItem><Blank><Check><Ico w={8} h={6} sw={1.5}><path d="M.5 3l2.200 2.200L7.500.500" /></Ico></Check></Blank><Pip /></TaskItem>
            <TaskItem><Blank /><Pip /></TaskItem>
            <TaskItem><Blank /><Pip /></TaskItem>
            <TaskItem><SiOpenai size={30} /><Pip /></TaskItem>
            <TaskItem><Glyph><CopilotArt /></Glyph><Pip /></TaskItem>
            <TaskItem><Blank /><Pip /></TaskItem>
            <TaskItem><Blank /><Pip /></TaskItem>
            <TaskItem><Blank /><Pip /></TaskItem>
            <ActiveTile><AppIcon $d={30}><SiElectron size={22} /></AppIcon><Pip $on /></ActiveTile>
          </TaskItems>
          <Weather>
            <WeatherIcon><CloudArt /><Badge>1</Badge></WeatherIcon>
            <Stack><Label>9°C</Label><Label $color="#cfc8dc">Cloudy</Label></Stack>
          </Weather>
          <Tray>
            <TrayIcon $mr={23}><Chev w={14} h={8} sw={2} /></TrayIcon>
            <TrayIcon $mr={21}><OneDrive /></TrayIcon>
            <TrayIcon $mr={19}><DropboxTray /></TrayIcon>
            <Stack $w="40px" $align="center" $mr={17}><Label>ENG</Label><Label>IN</Label></Stack>
            <TrayIcon $mr={10}><Wifi /></TrayIcon>
            <TrayIcon $mr={10}><Speaker /></TrayIcon>
            <TrayIcon $mr={20}><Battery /></TrayIcon>
            <Stack $align="flex-end"><Label $ls={-0.2}>21:11</Label><Label $ls={0.15}>24-03-2025</Label></Stack>
          </Tray>
        </Taskbar>

        <Win>
          <TitleBar>
            <AppIcon $d={20}><SiElectron size={15} /></AppIcon>
            <Label $ml={7} $ls={-0.21}>Customer Interaction Evaluation</Label>
            <WinControls><Minus /><Ico w={12} h={12} sw={1.3}><rect x=".6" y=".6" width="10.800" height="10.800" rx="1" /></Ico><CloseX /></WinControls>
          </TitleBar>
          <MenuBar>
            <MenuItem $w={37}><Label>File</Label></MenuItem>
            <MenuItem $w={41}><Label>Edit</Label></MenuItem>
            <MenuItem $w={47}><Label>View</Label></MenuItem>
            <MenuItem $w={70}><Label>Window</Label></MenuItem>
            <MenuItem $w={40}><Label $ls={-0.3}>Help</Label></MenuItem>
          </MenuBar>
          <Page>
            <Card>
              <CardTitle>Customer Interaction Journeys</CardTitle>
              <CardText>This screen is for evaluation participants</CardText>
              <Choices>
                <Choice>Airline</Choice>
                <Choice>Hospital</Choice>
                <Choice>Bank</Choice>
                <Choice>Uber Eats</Choice>
              </Choices>
            </Card>
          </Page>
        </Win>
      </Desktop>
    </>
  );
}
